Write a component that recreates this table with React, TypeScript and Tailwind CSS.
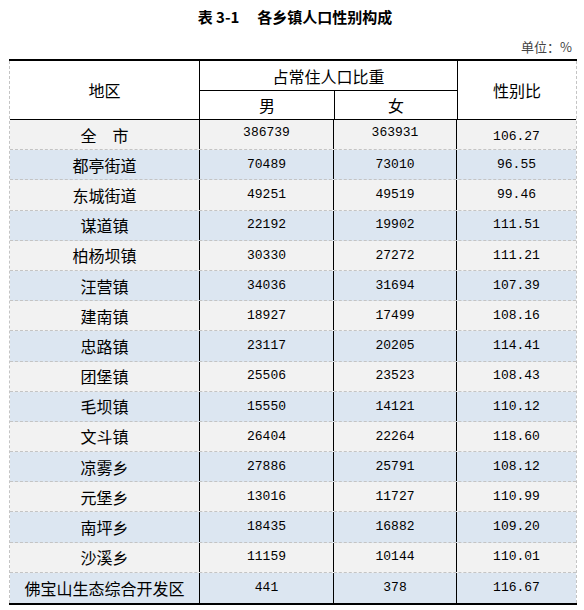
const rows: [string, string, string, string][] = [
  ["全　市", "386739", "363931", "106.27"],
  ["都亭街道", "70489", "73010", "96.55"],
  ["东城街道", "49251", "49519", "99.46"],
  ["谋道镇", "22192", "19902", "111.51"],
  ["柏杨坝镇", "30330", "27272", "111.21"],
  ["汪营镇", "34036", "31694", "107.39"],
  ["建南镇", "18927", "17499", "108.16"],
  ["忠路镇", "23117", "20205", "114.41"],
  ["团堡镇", "25506", "23523", "108.43"],
  ["毛坝镇", "15550", "14121", "110.12"],
  ["文斗镇", "26404", "22264", "118.60"],
  ["凉雾乡", "27886", "25791", "108.12"],
  ["元堡乡", "13016", "11727", "110.99"],
  ["南坪乡", "18435", "16882", "109.20"],
  ["沙溪乡", "11159", "10144", "110.01"],
  ["佛宝山生态综合开发区", "441", "378", "116.67"],
]

const cjk = "font-['Noto_Sans_CJK_SC',sans-serif]"
const mono = "font-['Liberation_Mono','Noto_Sans_CJK_SC',monospace]"

function App() {
  return (
    <div className="w-[584px] h-[610px] bg-white text-black overflow-hidden">
      <div className={`h-[34px] flex items-center justify-center pl-[6px] text-[15px] font-bold ${cjk}`}>
        <span>表 3-1</span>
        <span className="ml-[18px]">各乡镇人口性别构成</span>
      </div>
      <div className={`h-[25px] flex items-center justify-end pr-[12px] text-[13px] text-[#444] ${cjk}`}>
        单位：%
      </div>

      <div className="mx-[9px] w-[568px] border-t-2 border-b-2 border-black">
        <div className="border-x border-dashed border-[#c4c4c4]">
          {/* header */}
          <div className={`flex h-[59px] border-b border-black text-[16px] ${cjk}`}>
            <div className="w-[189px] flex items-center justify-center">地区</div>
            <div className="w-[258px] flex flex-col border-l border-black">
              <div className="h-[30px] flex items-center justify-center border-b border-black">
                占常住人口比重
              </div>
              <div className="flex-1 flex">
                <div className="w-[134px] flex items-center justify-center">男</div>
                <div className="flex-1 flex items-center justify-center border-l border-black">女</div>
              </div>
            </div>
            <div className="flex-1 flex items-center justify-center border-l border-black">性别比</div>
          </div>

          {/* body */}
          {rows.map((r, i) => (
            <div
              key={r[0]}
              className={`flex h-[30.2px] ${i % 2 === 0 ? "bg-[#f2f2f2]" : "bg-[#dce6f1]"} ${
                i < rows.length - 1 ? "border-b border-dashed border-[#c4c4c4]" : ""
              }`}
            >
              <div className={`w-[189px] flex items-center justify-center text-[16px] ${cjk}`}>{r[0]}</div>
              <div className={`w-[134px] flex items-center justify-center text-[13px] border-l border-black ${mono} ${i === 0 ? "pb-[4px]" : ""}`}>
                {r[1]}
              </div>
              <div className={`w-[123px] flex items-center justify-center text-[13px] border-l border-black ${mono} ${i === 0 ? "pb-[4px]" : ""}`}>
                {r[2]}
              </div>
              <div className={`flex-1 flex items-center justify-center text-[13px] border-l border-black ${mono} ${i === 0 ? "pt-[4px]" : ""}`}>
                {r[3]}
              </div>
            </div>
          ))}
        </div>
      </div>
    </div>
  )
}

export default App
